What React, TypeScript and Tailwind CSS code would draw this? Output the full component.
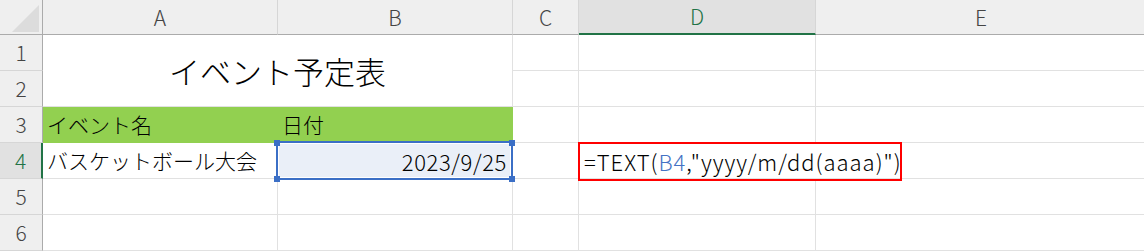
import React from "react";

const font = "font-['Noto_Sans_CJK_JP','Noto_Sans',sans-serif]";

function ColHead({ label, selected, last }: { label: string; selected?: boolean; last?: boolean }) {
  return (
    <div
      className={`flex items-center justify-center text-[21px] font-light leading-none ${
        selected
          ? "bg-[#e1e1e1] text-[#217346] border-b-2 border-b-[#217346]"
          : "bg-[#efefef] text-[#444444] border-b border-b-[#ababab]"
      } ${last ? "" : "border-r border-r-[#d6d6d6]"}`}
    >
      {label}
    </div>
  );
}

function RowHead({ n, selected }: { n: number; selected?: boolean }) {
  return (
    <div
      className={`flex items-center justify-center text-[21px] font-light leading-none border-b border-b-[#d6d6d6] ${
        selected
          ? "bg-[#e1e1e1] text-[#217346] border-r-2 border-r-[#217346]"
          : "bg-[#efefef] text-[#444444] border-r border-r-[#ababab]"
      }`}
    >
      {n}
    </div>
  );
}

function Cell({
  children,
  className = "",
  border = "border-r border-b border-[#e1e1e1]",
}: {
  children?: React.ReactNode;
  className?: string;
  border?: string;
}) {
  return (
    <div className={`flex items-center text-[21px] font-light leading-none text-black whitespace-nowrap ${border} ${className}`}>
      {children}
    </div>
  );
}

export default function App() {
  return (
    <div className={`relative w-[1144px] h-[252px] bg-white overflow-hidden ${font}`}>
      <div className="grid grid-cols-[43px_235px_235px_66px_237px_330px] grid-rows-[35px_repeat(6,36px)_1px]">
        {/* header row */}
        <div className="relative bg-[#efefef] border-r border-b border-[#ababab]">
          <svg className="absolute left-0 top-0" width="42" height="34" viewBox="0 0 42 34">
            <polygon points="12,32 39,32 39,5" fill="#dcdcdc" />
          </svg>
        </div>
        <ColHead label="A" />
        <ColHead label="B" />
        <ColHead label="C" />
        <ColHead label="D" selected />
        <ColHead label="E" last />

        {/* row 1 + 2 */}
        <RowHead n={1} />
        <div className="col-span-2 row-span-2 flex items-center justify-center border-r border-b border-[#e1e1e1] text-[31px] font-light leading-none text-black">
          イベント予定表
        </div>
        <Cell />
        <Cell />
        <Cell border="border-b border-[#e1e1e1]" />
        <RowHead n={2} />
        <Cell />
        <Cell />
        <Cell border="border-b border-[#e1e1e1]" />

        {/* row 3 */}
        <RowHead n={3} />
        <Cell border="border-r border-b border-[#92d050]" className="bg-[#92d050] pl-[4px]">
          イベント名
        </Cell>
        <Cell border="border-r border-b border-[#92d050]" className="bg-[#92d050] pl-[4px]">
          日付
        </Cell>
        <Cell />
        <Cell />
        <Cell border="border-b border-[#e1e1e1]" />

        {/* row 4 */}
        <RowHead n={4} selected />
        <Cell className="pl-[4px]">バスケットボール大会</Cell>
        <Cell className="bg-[#eaeff8] justify-end pr-[5px] text-[22px] tracking-[0.6px]">2023/9/25</Cell>
        <Cell />
        <Cell border="border-b border-[#e1e1e1]" className="pl-[5px] overflow-visible text-[22px] tracking-[1px]">
          <span>
            =TEXT(<span className="text-[#4472c4]">B4</span>,"yyyy/m/dd(aaaa)")
          </span>
        </Cell>
        <Cell border="border-b border-[#e1e1e1]" />

        {/* row 5 */}
        <RowHead n={5} />
        <Cell />
        <Cell />
        <Cell />
        <Cell />
        <Cell border="border-b border-[#e1e1e1]" />

        {/* row 6 */}
        <RowHead n={6} />
        <Cell />
        <Cell />
        <Cell />
        <Cell />
        <Cell border="border-b border-[#e1e1e1]" />
      </div>

      {/* selection box on B4 */}
      <div className="absolute left-[276px] top-[141px] w-[237px] h-[39px] border-2 border-[#3b6fc6] shadow-[inset_0_0_0_1px_#ffffff]" />
      <div className="absolute left-[274px] top-[140px] w-[6px] h-[6px] bg-[#3b6fc6]" />
      <div className="absolute left-[274px] top-[176px] w-[6px] h-[6px] bg-[#3b6fc6]" />
      <div className="absolute left-[509px] top-[140px] w-[6px] h-[6px] bg-[#3b6fc6]" />
      <div className="absolute left-[509px] top-[176px] w-[6px] h-[6px] bg-[#3b6fc6]" />

      {/* red annotation box */}
      <div className="absolute left-[578px] top-[142px] w-[324px] h-[39px] border-2 border-[#ff0000]" />
    </div>
  );
}
